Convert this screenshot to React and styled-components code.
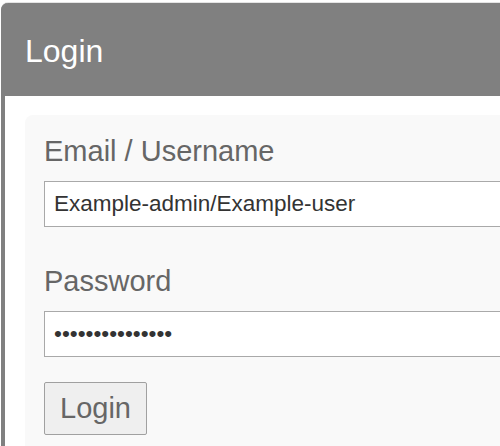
import React from "react";
import styled, { createGlobalStyle } from "styled-components";

const Global = createGlobalStyle`
  html, body { margin: 0; padding: 0; background: #ffffff; }
  body { font-family: "Liberation Sans", Arial, sans-serif; overflow: hidden; }
`;

const Page = styled.div`
  width: 500px;
  height: 446px;
  overflow: hidden;
  padding: 3px 0 0 1px;
  box-sizing: border-box;
`;

const Card = styled.div`
  width: 560px;
  border-left: 4px solid #808080;
  border-top-left-radius: 7px;
  background: #ffffff;
  box-shadow: 0 -1px 0 #e4e4e4;
`;

const Header = styled.div`
  height: 93px;
  margin-left: -4px;
  padding-left: 24px;
  background: #808080;
  border-top-left-radius: 7px;
  display: flex;
  align-items: center;
  box-sizing: border-box;
`;

const Title = styled.h1`
  margin: 0;
  padding-top: 4px;
  font-size: 32px;
  font-weight: normal;
  color: #ffffff;
`;

const Body = styled.div`
  padding: 19px 0 0 20px;
`;

const Panel = styled.form`
  background: #f9f9f9;
  border-top-left-radius: 8px;
  padding: 20px 0 30px 19px;
  display: flex;
  flex-direction: column;
  align-items: flex-start;
`;

const Label = styled.label`
  font-size: 29px;
  color: #666666;
  line-height: 33px;
  margin-top: ${(p) => p.$top || 0}px;
`;

const Input = styled.input`
  margin-top: 13px;
  width: 540px;
  height: 46px;
  box-sizing: border-box;
  border: 1px solid #a9a9a9;
  border-radius: 0;
  background: #ffffff;
  padding: 0 9px;
  font-family: "Liberation Sans", Arial, sans-serif;
  font-size: 22.5px;
  color: #333333;
  outline: none;
`;

const Button = styled.button`
  margin-top: 25px;
  width: 103px;
  height: 53px;
  box-sizing: border-box;
  border: 1px solid #a0a0a0;
  border-radius: 2px;
  background: #efefef;
  color: #666666;
  font-family: "Liberation Sans", Arial, sans-serif;
  font-size: 29px;
  padding: 0;
`;

export default function App() {
  return (
    <>
      <Global />
      <Page>
        <Card>
          <Header>
            <Title>Login</Title>
          </Header>
          <Body>
            <Panel onSubmit={(e) => e.preventDefault()}>
              <Label htmlFor="user">Email / Username</Label>
              <Input id="user" type="text" defaultValue="Example-admin/Example-user" />
              <Label htmlFor="pass" $top={38}>Password</Label>
              <Input id="pass" type="password" defaultValue="123456789012345" />
              <Button type="submit">Login</Button>
            </Panel>
          </Body>
        </Card>
      </Page>
    </>
  );
}
